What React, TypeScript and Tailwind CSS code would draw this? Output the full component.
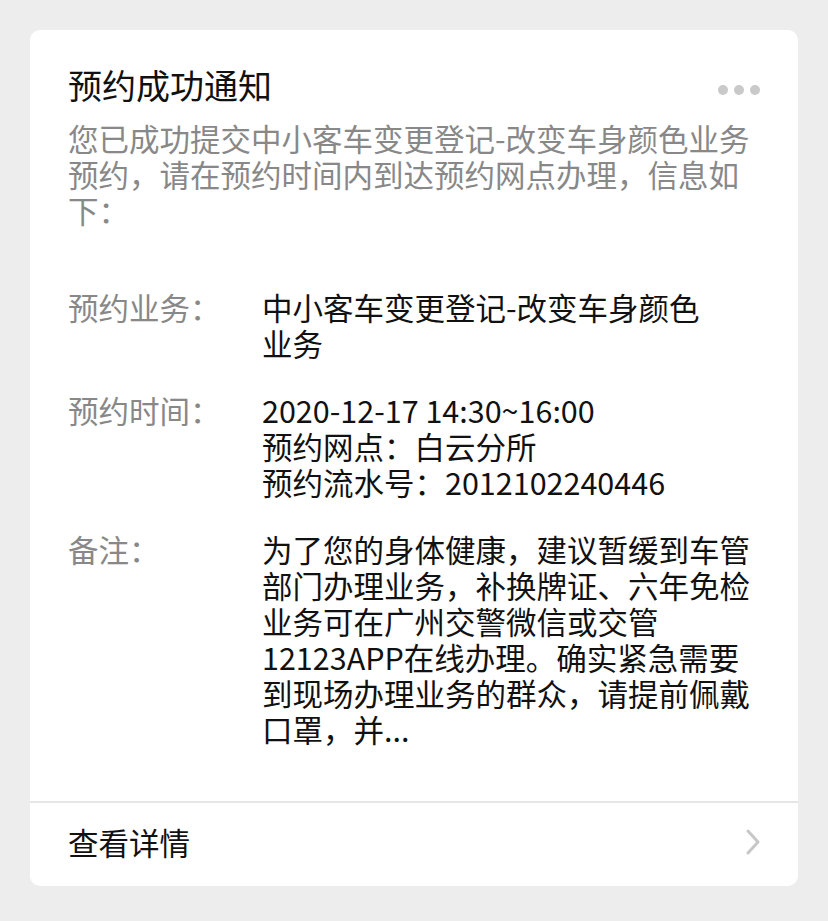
import React from 'react';

const rows: { label: string; lines: string[] }[] = [
  { label: '预约业务：', lines: ['中小客车变更登记-改变车身颜色', '业务'] },
  {
    label: '预约时间：',
    lines: ['2020-12-17 14:30~16:00', '预约网点：白云分所', '预约流水号：2012102240446'],
  },
  {
    label: '备注：',
    lines: [
      '为了您的身体健康，建议暂缓到车管',
      '部门办理业务，补换牌证、六年免检',
      '业务可在广州交警微信或交管',
      '12123APP在线办理。确实紧急需要',
      '到现场办理业务的群众，请提前佩戴',
      '口罩，并...',
    ],
  },
];

export default function App() {
  return (
    <div
      className="min-h-[921px] bg-[#ededed] px-[30px] pt-[30px] pb-[35px]"
      style={{ fontFamily: '"Noto Sans CJK SC", "Noto Sans", sans-serif' }}
    >
      <div className="bg-white rounded-[10px] overflow-hidden">
        <div className="pl-[38px] pr-[40px] pt-[30px]">
          {/* Header */}
          <div className="flex items-start justify-between">
            <h1 className="text-[34px] leading-[50px] text-[#111] font-normal">预约成功通知</h1>
            <div className="flex gap-[6px] mt-[25px] mr-[-2px]">
              <span className="w-[10px] h-[10px] rounded-full bg-[#c9c9c9]" />
              <span className="w-[10px] h-[10px] rounded-full bg-[#c9c9c9]" />
              <span className="w-[10px] h-[10px] rounded-full bg-[#c9c9c9]" />
            </div>
          </div>

          <p className="mt-[10px] text-[30.5px] leading-[36px] text-[#888]">
            您已成功提交中小客车变更登记-改变车身颜色业务
            <br />
            预约，请在预约时间内到达预约网点办理，信息如
            <br />
            下：
          </p>

          {/* Detail rows */}
          <div className="mt-[61px] flex flex-col gap-[31px] pb-[54px]">
            {rows.map(row => (
              <div key={row.label} className="flex text-[30.5px] leading-[36px]">
                <div className="w-[194px] shrink-0 text-[#888]">{row.label}</div>
                <div className="text-[#111]">
                  {row.lines.map(line => (
                    <div key={line}>{line}</div>
                  ))}
                </div>
              </div>
            ))}
          </div>
        </div>

        {/* Footer */}
        <div className="border-t-2 border-[#e6e6e6] h-[85px] pl-[38px] pr-[37px] pb-[6px] flex items-center justify-between">
          <span className="text-[30.5px] leading-[36px] text-[#111]">查看详情</span>
          <svg width="16" height="26" viewBox="0 0 16 26" fill="none">
            <path d="M3 2 L13 13 L3 24" stroke="#c7c7c7" strokeWidth="3" strokeLinecap="round" strokeLinejoin="round" />
          </svg>
        </div>
      </div>
    </div>
  );
}
